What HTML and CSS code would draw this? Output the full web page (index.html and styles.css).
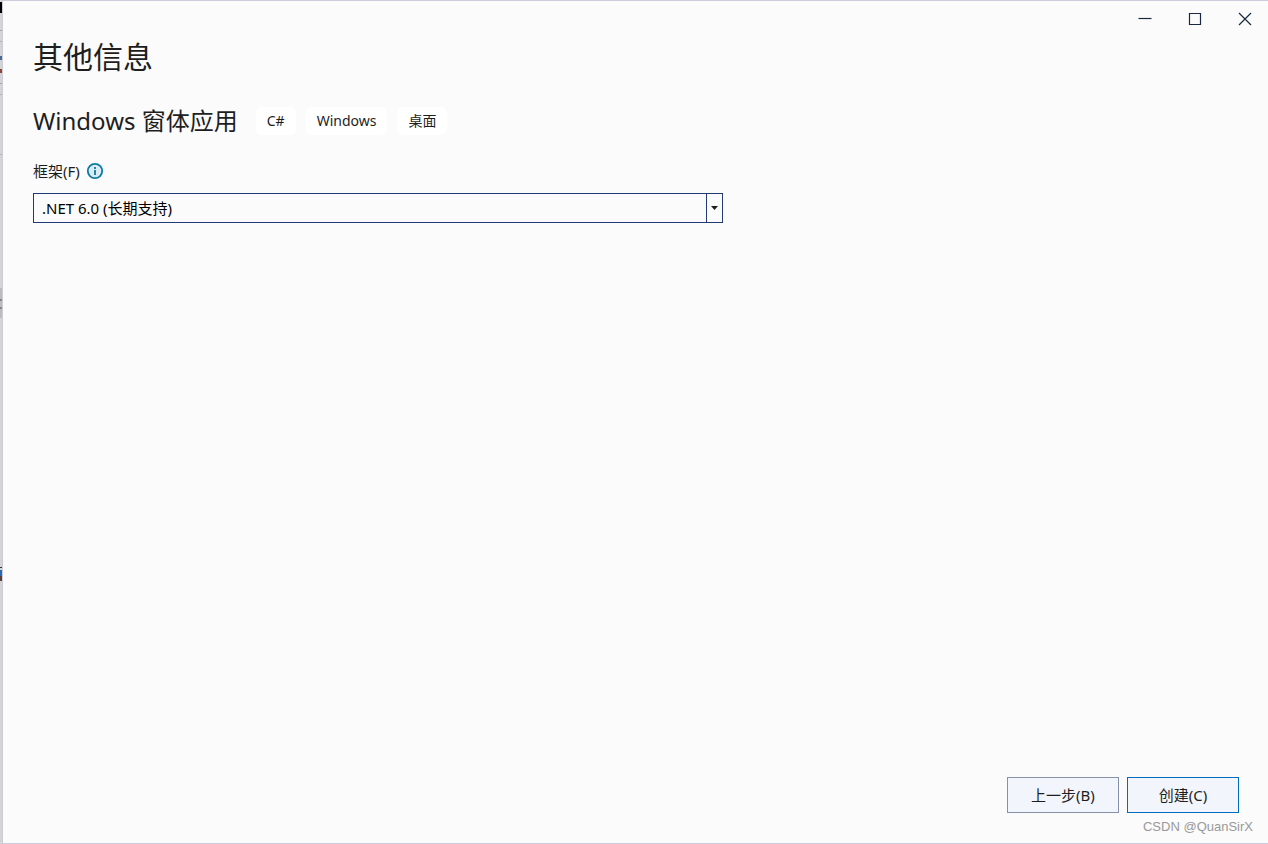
FILE: index.html
```html
<!DOCTYPE html>
<html lang="zh-CN">
<head>
    <meta charset="UTF-8">
    <meta name="viewport" content="width=device-width, initial-scale=1.0">
    <title>其他信息</title>
    <link rel="stylesheet" href="styles.css">
</head>
<body>
<div class="backdrop"></div>
<div class="dialog">
    <div class="window-controls">
        <button class="window-button" type="button" aria-label="最小化">
            <svg width="14" height="14" viewBox="0 0 14 14"><path d="M0.5 6.5h13" /></svg>
        </button>
        <button class="window-button" type="button" aria-label="最大化">
            <svg width="14" height="14" viewBox="0 0 14 14"><path d="M1.5 1.5h11v11h-11z" /></svg>
        </button>
        <button class="window-button" type="button" aria-label="关闭">
            <svg width="14" height="14" viewBox="0 0 14 14"><path d="M1 1l12 12M13 1L1 13" /></svg>
        </button>
    </div>

    <main class="content">
        <h1 class="title">其他信息</h1>
        <div class="template">
            <h2 class="template-name">Windows 窗体应用</h2>
            <ul class="tags">
                <li class="tag">C#</li>
                <li class="tag">Windows</li>
                <li class="tag">桌面</li>
            </ul>
        </div>

        <div class="field-label">
            <label for="framework">框架(F)</label>
            <svg class="info-icon" width="18" height="18" viewBox="0 0 18 18">
                <circle cx="9" cy="9" r="7.2" />
                <path d="M9 8v5M9 5v2" />
            </svg>
        </div>
        <div class="combo">
            <select class="combo-select" id="framework">
                <option>.NET 6.0 (长期支持)</option>
            </select>
            <span class="combo-arrow">
                <svg width="7" height="4" viewBox="0 0 7 4"><path d="M0 0h7L3.5 4z" /></svg>
            </span>
        </div>
    </main>

    <footer class="actions">
        <button class="button" type="button">上一步(B)</button>
        <button class="button button-primary" type="button">创建(C)</button>
    </footer>
    <p class="watermark">CSDN @QuanSirX</p>
</div>
</body>
</html>
```
FILE: styles.css
```css
* {
    box-sizing: border-box;
}

body {
    margin: 0;
    display: flex;
    min-height: 100vh;
    background: #fbfbfb;
    color: #1e1e1e;
    font-family: "Noto Sans", "Noto Sans CJK SC", sans-serif;
    font-size: 15px;
    line-height: 20px;
}

button, select {
    font: inherit;
    color: inherit;
}

h1, h2, ul, p {
    margin: 0;
    padding: 0;
    font-weight: normal;
}

/* Edge of the window that lies behind the dialog */
.backdrop {
    width: 2px;
    background:
        linear-gradient(#000, #000) 0 2px / 2px 11px no-repeat,
        linear-gradient(#a8a8a8, #a8a8a8) 0 30px / 2px 1px no-repeat,
        linear-gradient(#b4b4b4, #b4b4b4) 0 41px / 2px 1px no-repeat,
        linear-gradient(#4a6a90, #4a6a90) 0 56px / 2px 4px no-repeat,
        linear-gradient(#8a4a3a, #8a4a3a) 0 69px / 2px 4px no-repeat,
        linear-gradient(#a8a8a8, #a8a8a8) 0 83px / 2px 1px no-repeat,
        linear-gradient(#b4b4b4, #b4b4b4) 0 94px / 2px 1px no-repeat,
        linear-gradient(#b4b4b4, #b4b4b4) 0 154px / 2px 1px no-repeat,
        linear-gradient(#888, #888) 0 299px / 2px 2px no-repeat,
        linear-gradient(#888, #888) 0 307px / 2px 2px no-repeat,
        linear-gradient(#bcbcbc, #bcbcbc) 0 288px / 2px 30px no-repeat,
        linear-gradient(#333, #333) 0 567px / 2px 1px no-repeat,
        linear-gradient(#2d6ab0, #2d6ab0) 0 570px / 2px 6px no-repeat,
        linear-gradient(#5a4038, #5a4038) 0 576px / 2px 5px no-repeat,
        #d4d4d4;
}

.dialog {
    flex: 1;
    display: flex;
    flex-direction: column;
    border: 1px solid #ccccdc;
    border-right: none;
}

.window-controls {
    display: flex;
    justify-content: flex-end;
    gap: 4px;
}

.window-button {
    display: flex;
    align-items: center;
    justify-content: center;
    width: 46px;
    height: 36px;
    padding: 0;
    border: none;
    background: none;
}

.window-button svg {
    fill: none;
    stroke: #1b293e;
    stroke-width: 1.2;
}

.content {
    flex: 1;
    padding: 0 30px;
}

.title {
    font-size: 30px;
    line-height: 40px;
}

.template {
    display: flex;
    align-items: center;
    gap: 18px;
    margin-top: 28px;
}

.template-name {
    font-size: 24px;
    line-height: 32px;
}

.tags {
    display: flex;
    gap: 10px;
    list-style: none;
}

.tag {
    padding: 4px 11px;
    border-radius: 6px;
    background: #fff;
    font-size: 14px;
}

.field-label {
    display: flex;
    align-items: center;
    gap: 6px;
    margin-top: 24px;
}

.info-icon {
    fill: #dcebf2;
    stroke: #0a7ca5;
    stroke-width: 1.8;
}

.combo {
    display: flex;
    position: relative;
    max-width: 690px;
    height: 30px;
    margin-top: 12px;
    border: 1px solid #1f3a75;
}

.combo-select {
    appearance: none;
    flex: 1;
    padding: 0 24px 0 8px;
    border: none;
    background: none;
    color: #000;
}

/* Drop-down part, drawn over the right end of the select */
.combo-arrow {
    position: absolute;
    top: 0;
    right: 0;
    bottom: 0;
    display: flex;
    align-items: center;
    justify-content: center;
    width: 16px;
    padding-right: 1px;
    border-left: 1px solid #1f3a75;
    pointer-events: none;
}

.combo-arrow svg {
    fill: #1e1e1e;
}

.actions {
    display: flex;
    justify-content: flex-end;
    gap: 8px;
    padding: 0 29px;
}

.button {
    width: 112px;
    height: 36px;
    padding: 0;
    border: 1px solid #8591a9;
    background: #f2f5fc;
}

.button-primary {
    border-color: #006cbe;
}

.watermark {
    padding: 4px 15px 6px;
    color: #999;
    font-family: "Liberation Sans", Arial, sans-serif;
    font-size: 13px;
    text-align: right;
}
```
